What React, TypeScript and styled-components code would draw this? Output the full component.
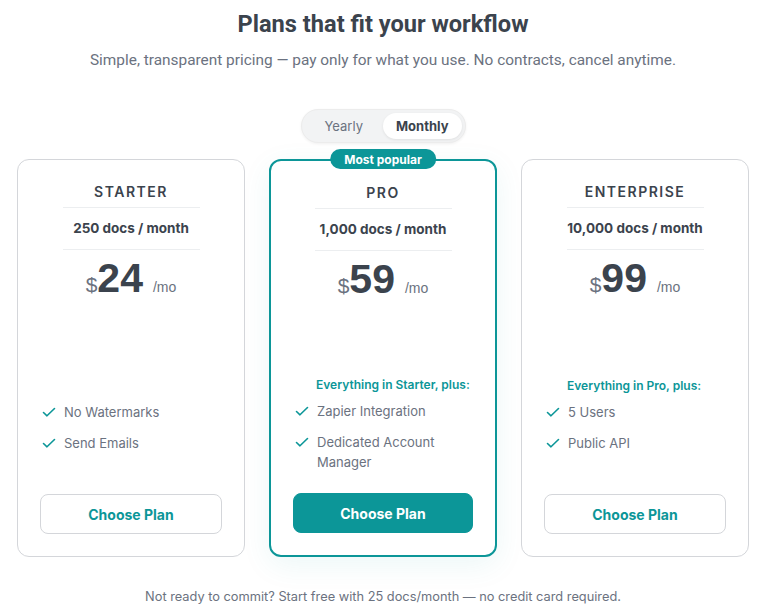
import React from "react";
import styled, { createGlobalStyle } from "styled-components";

const Global = createGlobalStyle`
  html, body { margin: 0; padding: 0; background: #ffffff; }
  body { font-family: Inter, "Noto Sans", sans-serif; color: #374151; }
  * { box-sizing: border-box; }
`;

const TEAL = "#0c9698";

const Page = styled.div`
  padding: 9px 19px 0 17px;
  display: flex;
  flex-direction: column;
  align-items: center;
`;

const Title = styled.h1`
  margin: 0;
  font-family: Roboto, Inter, sans-serif;
  font-size: 23.6px;
  font-weight: 700;
  color: #3b434d;
  line-height: 30px;
`;

const Subtitle = styled.p`
  margin: 11px 0 0;
  font-family: Roboto, Inter, sans-serif;
  font-size: 15.4px;
  color: #6b7280;
  line-height: 20px;
`;

const Toggle = styled.div`
  margin-top: 39px;
  display: flex;
  padding: 3px;
  background: #f2f3f4;
  border: 1px solid #ececec;
  border-radius: 999px;
  box-shadow: 0 1px 3px rgba(0, 0, 0, 0.06);
`;

const ToggleBtn = styled.span<{ $active?: boolean }>`
  padding: 0 ${(p) => (p.$active ? 13 : 20)}px;
  height: 26px;
  display: flex;
  align-items: center;
  border-radius: 999px;
  font-size: 13px;
  font-weight: ${(p) => (p.$active ? 700 : 400)};
  color: ${(p) => (p.$active ? "#3b434d" : "#6b7280")};
  background: ${(p) => (p.$active ? "#ffffff" : "transparent")};
  box-shadow: ${(p) => (p.$active ? "0 1px 3px rgba(0,0,0,0.08)" : "none")};
`;

const Grid = styled.div`
  margin-top: 16px;
  width: 100%;
  display: grid;
  grid-template-columns: repeat(3, 1fr);
  gap: 24px;
`;

const Card = styled.div<{ $featured?: boolean }>`
  position: relative;
  display: flex;
  flex-direction: column;
  align-items: center;
  height: 398px;
  padding: 22px 22px 22px;
  border-radius: 12px;
  background: #fff;
  border: ${(p) => (p.$featured ? `2px solid ${TEAL}` : "1px solid #d4d6da")};
  box-shadow: ${(p) =>
    p.$featured ? "0 8px 30px rgba(12,150,152,0.08)" : "none"};
`;

const Badge = styled.div`
  position: absolute;
  top: -12px;
  left: 50%;
  transform: translateX(-50%);
  height: 20px;
  padding: 0 14px;
  display: flex;
  align-items: center;
  border-radius: 10px;
  background: ${TEAL};
  color: #fff;
  font-size: 12px;
  font-weight: 700;
  white-space: nowrap;
`;

const PlanName = styled.div`
  width: 137px;
  text-align: center;
  font-size: 14px;
  font-weight: 600;
  letter-spacing: 1.5px;
  color: #3b434d;
  padding-bottom: 5px;
  border-bottom: 1px solid #eceef0;
  line-height: 20px;
`;

const Docs = styled.div`
  width: 137px;
  text-align: center;
  font-size: 13.5px;
  font-weight: 700;
  color: #3b434d;
  padding: 10px 0 11px;
  border-bottom: 1px solid #eceef0;
  line-height: 20px;
  white-space: nowrap;
`;

const Price = styled.div`
  margin-top: 6px;
  display: flex;
  align-items: baseline;
  font-family: "Liberation Sans", Arial, sans-serif;
  color: #3b434d;
`;

const Currency = styled.span`
  font-size: 21px;
  color: #6b7280;
`;

const Amount = styled.span`
  font-size: 41px;
  font-weight: 700;
  line-height: 44px;
`;

const Per = styled.span`
  margin-left: 10px;
  font-size: 14px;
  color: #6b7280;
`;

const Features = styled.div`
  margin-top: auto;
  width: 100%;
  display: flex;
  flex-direction: column;
`;

const Lead = styled.div`
  height: 20px;
  padding-left: 23px;
  font-size: 12px;
  font-weight: 600;
  color: ${TEAL};
  line-height: 20px;
`;

const List = styled.ul`
  list-style: none;
  margin: 6px 0 0;
  padding: 0;
  display: flex;
  flex-direction: column;
  gap: 11px;
  min-height: 80px;
`;

const Item = styled.li`
  display: flex;
  align-items: flex-start;
  gap: 8px;
  padding-left: 2px;
  font-size: 13px;
  line-height: 20px;
  color: #6b7280;
`;

const Check = styled.svg`
  flex: none;
  margin-top: 4px;
`;

const Button = styled.button<{ $primary?: boolean }>`
  margin-top: 12px;
  width: 100%;
  height: 40px;
  border-radius: 8px;
  font-family: Inter, sans-serif;
  font-size: 14px;
  font-weight: 700;
  cursor: pointer;
  color: ${(p) => (p.$primary ? "#fff" : TEAL)};
  background: ${(p) => (p.$primary ? TEAL : "#fff")};
  border: 1px solid ${(p) => (p.$primary ? TEAL : "#d4d6da")};
`;

const Footer = styled.p`
  margin: 30px 0 0;
  font-size: 12.8px;
  color: #6b7280;
  line-height: 20px;
`;

type Plan = {
  name: string;
  docs: string;
  price: string;
  lead?: string;
  features: string[];
  featured?: boolean;
};

const plans: Plan[] = [
  { name: "STARTER", docs: "250 docs / month", price: "24", features: ["No Watermarks", "Send Emails"] },
  {
    name: "PRO",
    docs: "1,000 docs / month",
    price: "59",
    lead: "Everything in Starter, plus:",
    features: ["Zapier Integration", "Dedicated Account Manager"],
    featured: true,
  },
  {
    name: "ENTERPRISE",
    docs: "10,000 docs / month",
    price: "99",
    lead: "Everything in Pro, plus:",
    features: ["5 Users", "Public API"],
  },
];

const CheckIcon = () => (
  <Check width="14" height="12" viewBox="0 0 14 12" fill="none">
    <path d="M1.5 6.5 L5 9.8 L12.5 2.5" stroke={TEAL} strokeWidth="1.6" strokeLinecap="round" strokeLinejoin="round" />
  </Check>
);

export default function App() {
  return (
    <Page>
      <Global />
      <Title>Plans that fit your workflow</Title>
      <Subtitle>Simple, transparent pricing — pay only for what you use. No contracts, cancel anytime.</Subtitle>
      <Toggle>
        <ToggleBtn>Yearly</ToggleBtn>
        <ToggleBtn $active>Monthly</ToggleBtn>
      </Toggle>
      <Grid>
        {plans.map((p) => (
          <Card key={p.name} $featured={p.featured}>
            {p.featured && <Badge>Most popular</Badge>}
            <PlanName>{p.name}</PlanName>
            <Docs>{p.docs}</Docs>
            <Price>
              <Currency>$</Currency>
              <Amount>{p.price}</Amount>
              <Per>/mo</Per>
            </Price>
            <Features>
              <Lead>{p.lead ?? ""}</Lead>
              <List>
                {p.features.map((f) => (
                  <Item key={f}>
                    <CheckIcon />
                    <span>{f}</span>
                  </Item>
                ))}
              </List>
            </Features>
            <Button $primary={p.featured}>Choose Plan</Button>
          </Card>
        ))}
      </Grid>
      <Footer>Not ready to commit? Start free with 25 docs/month — no credit card required.</Footer>
    </Page>
  );
}
